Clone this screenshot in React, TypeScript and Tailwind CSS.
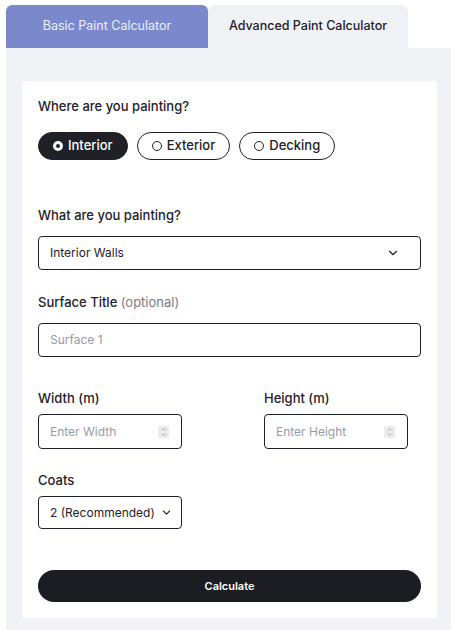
import { ChevronDown } from "lucide-react";

function Radio({ label, active }: { label: string; active?: boolean }) {
  return (
    <button
      className={
        active
          ? "flex items-center gap-[5px] h-[28px] px-[14px] rounded-full bg-[#202126] border border-[#202126] text-white text-[13px] font-medium"
          : "flex items-center gap-[5px] h-[28px] px-[14px] rounded-full bg-white border border-[#202126] text-[#202126] text-[13px] font-medium"
      }
    >
      {active ? (
        <span className="w-[10px] h-[10px] rounded-full border-[3px] border-white bg-[#202126]" />
      ) : (
        <span className="w-[10px] h-[10px] rounded-full border border-[#202126] bg-white" />
      )}
      {label}
    </button>
  );
}

function Spinner() {
  return (
    <span className="flex flex-col items-center justify-center w-[11px] h-[12px] bg-[#ececf0]">
      <svg width="7" height="10" viewBox="0 0 7 10" fill="none" stroke="#9a9aa4" strokeWidth="0.9">
        <path d="M1.5 3.5 L3.5 1.5 L5.5 3.5" />
        <path d="M1.5 6.5 L3.5 8.5 L5.5 6.5" />
      </svg>
    </span>
  );
}

export default function App() {
  return (
    <div className="w-[451px] h-[630px] bg-white font-['Inter',sans-serif] text-[#1f2029] overflow-hidden">
      <div className="pl-[6px] pt-[5px]">
        {/* Tabs */}
        <div className="flex">
          <div className="w-[202px] h-[43px] rounded-t-[6px] bg-[#7b89cc] text-[#eef0fa] text-[12.5px] flex items-center justify-center">
            Basic Paint Calculator
          </div>
          <div className="w-[200px] h-[43px] rounded-t-[6px] bg-[#f1f2f6] text-[#1f2029] text-[12.5px] font-medium flex items-center justify-center">
            Advanced Paint Calculator
          </div>
        </div>

        {/* Panel */}
        <div className="bg-[#f1f2f6] h-[582px] pt-[33px] pl-[16px] pr-[14px]">
          <div className="bg-white rounded-[3px] h-[537px] px-[16px] pt-[16px]">
            <p className="text-[13px] font-medium leading-[18px]">Where are you painting?</p>
            <div className="flex gap-[9px] mt-[17px]">
              <Radio label="Interior" active />
              <Radio label="Exterior" />
              <Radio label="Decking" />
            </div>

            <p className="text-[13px] font-medium leading-[18px] mt-[46px]">What are you painting?</p>
            <div className="mt-[12px] h-[34px] border border-[#202126] rounded-[4px] flex items-center justify-between pl-[11px] pr-[20px] text-[12px]">
              <span>Interior Walls</span>
              <ChevronDown className="w-[14px] h-[14px]" strokeWidth={2} />
            </div>

            <p className="text-[13px] font-medium leading-[18px] mt-[23px]">
              Surface Title <span className="text-[#7b7b88] font-normal">(optional)</span>
            </p>
            <div className="mt-[12px] h-[34px] border border-[#202126] rounded-[4px] flex items-center pl-[11px] text-[12px] text-[#9a9aa4]">
              Surface 1
            </div>

            <div className="grid grid-cols-[226px_144px] mt-[32px]">
              <div>
                <p className="text-[13px] font-medium leading-[18px]">Width (m)</p>
                <div className="mt-[7px] w-[144px] h-[35px] border border-[#202126] rounded-[4px] flex items-center justify-between pl-[11px] pr-[12px] text-[12px] text-[#9a9aa4]">
                  <span>Enter Width</span>
                  <Spinner />
                </div>
              </div>
              <div>
                <p className="text-[13px] font-medium leading-[18px]">Height (m)</p>
                <div className="mt-[7px] w-[144px] h-[35px] border border-[#202126] rounded-[4px] flex items-center justify-between pl-[11px] pr-[12px] text-[12px] text-[#9a9aa4]">
                  <span>Enter Height</span>
                  <Spinner />
                </div>
              </div>
            </div>

            <p className="text-[13px] font-medium leading-[18px] mt-[22px]">Coats</p>
            <div className="mt-[7px] w-[144px] h-[33px] border border-[#202126] rounded-[4px] flex items-center justify-between pl-[11px] pr-[8px] text-[12px]">
              <span>2 (Recommended)</span>
              <ChevronDown className="w-[13px] h-[13px]" strokeWidth={2} />
            </div>

            <button className="mt-[41px] w-full h-[32px] rounded-full bg-[#1c1d22] text-white text-[11px] font-semibold">
              Calculate
            </button>
          </div>
        </div>
      </div>
    </div>
  );
}
